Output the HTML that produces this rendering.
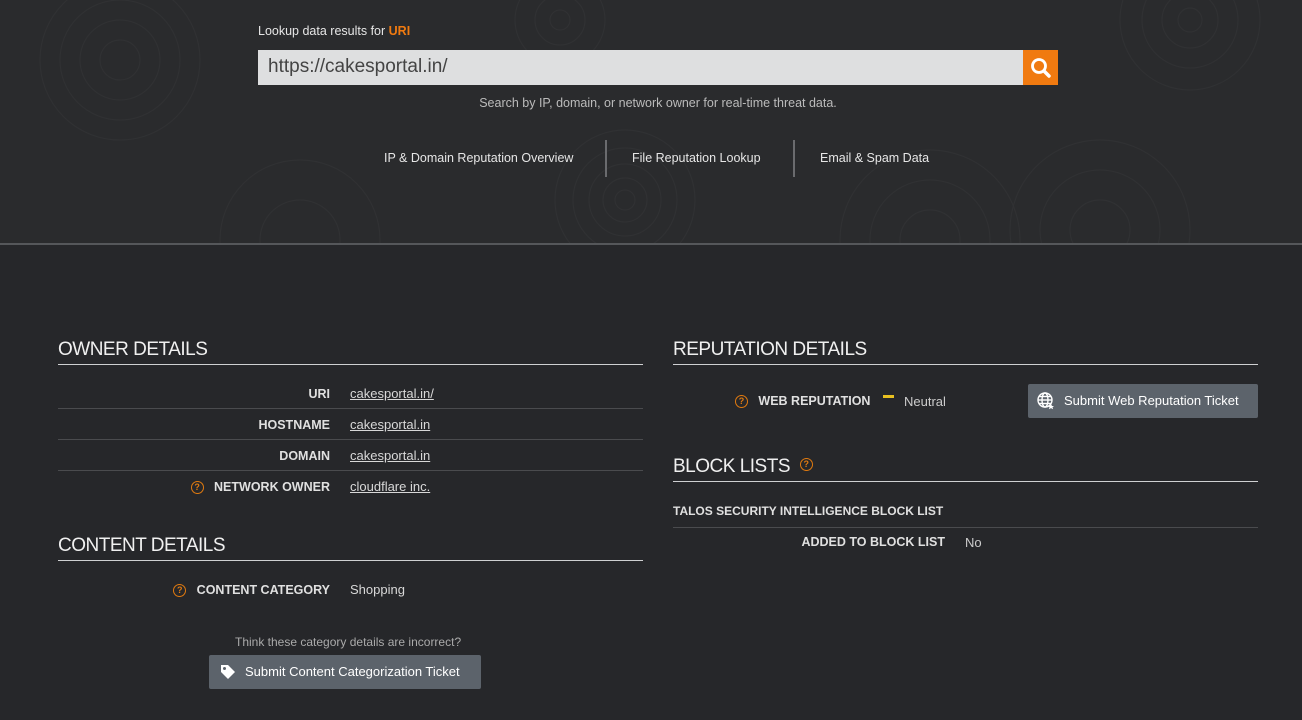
<!DOCTYPE html>
<html><head><style>
*{margin:0;padding:0;box-sizing:border-box}
body{width:1302px;height:720px;background:#26272a;font-family:"Liberation Sans",sans-serif;color:#e6e6e6;position:relative;overflow:hidden;font-size:13px}
.hdr{position:absolute;left:0;top:0;width:1302px;height:245px;background:#2a2b2d;border-bottom:2px solid #55575a;overflow:hidden}
.a{position:absolute}
.h2{position:absolute;font-size:19px;color:#f0f0f0;border-bottom:1px solid #cfd0d2;padding-bottom:3px;letter-spacing:-0.5px}
.row{position:absolute;left:58px;width:585px;height:31px;border-bottom:1px solid #4a4b4e}
.lbl{position:absolute;right:313px;top:9px;font-weight:bold;font-size:12.5px;color:#e0e0e0}
.val{position:absolute;left:292px;top:8px;color:#d8d8d8;text-decoration:underline;font-size:13px}
.q{display:inline-block;width:13px;height:13px;border:1.5px solid #e07a10;border-radius:50%;color:#e07a10;font-size:9px;text-align:center;line-height:10px;font-weight:bold;vertical-align:middle}
.btn{position:absolute;background:#5c636b;border-radius:2px;color:#fff;font-size:13px}
</style></head><body>
<div class="hdr">
<svg width="1302" height="244" style="position:absolute;left:0;top:0" fill="none" stroke="#303133" stroke-width="1.2">
<g><circle cx="120" cy="60" r="20"/><circle cx="120" cy="60" r="40"/><circle cx="120" cy="60" r="60"/><circle cx="120" cy="60" r="80"/></g>
<g><circle cx="625" cy="200" r="10"/><circle cx="625" cy="200" r="22"/><circle cx="625" cy="200" r="36"/><circle cx="625" cy="200" r="52"/><circle cx="625" cy="200" r="70"/></g>
<g><circle cx="560" cy="20" r="10"/><circle cx="560" cy="20" r="25"/><circle cx="560" cy="20" r="45"/></g>
<g><circle cx="1190" cy="20" r="12"/><circle cx="1190" cy="20" r="28"/><circle cx="1190" cy="20" r="48"/><circle cx="1190" cy="20" r="70"/></g>
<g><circle cx="930" cy="240" r="30"/><circle cx="930" cy="240" r="60"/><circle cx="930" cy="240" r="90"/></g>
<g><circle cx="1100" cy="230" r="30"/><circle cx="1100" cy="230" r="60"/><circle cx="1100" cy="230" r="90"/></g>
<g><circle cx="300" cy="240" r="40"/><circle cx="300" cy="240" r="80"/></g>
</svg>
<div class="a" style="left:258px;top:24px;font-size:12.5px">Lookup data results for <span style="color:#f07a10;font-weight:bold">URI</span></div>
<div class="a" style="left:258px;top:50px;width:765px;height:35px;background:#dedfe0;color:#444;font-size:19px;padding:6px 0 0 10px">https://cakesportal.in/</div>
<div class="a" style="left:1023px;top:50px;width:35px;height:35px;background:#f07a10">
<svg width="35" height="35"><circle cx="16" cy="16" r="6.5" stroke="#fff" stroke-width="2.8" fill="none"/><line x1="21" y1="21" x2="26" y2="26" stroke="#fff" stroke-width="3.5" stroke-linecap="round"/></svg></div>
<div class="a" style="left:0;width:1316px;top:96px;text-align:center;font-size:12.5px;color:#bbb">Search by IP, domain, or network owner for real-time threat data.</div>
<div class="a" style="left:384px;top:151px;font-size:12.5px">IP &amp; Domain Reputation Overview</div>
<div class="a" style="left:605px;top:140px;width:2px;height:37px;background:#6a6b6e"></div>
<div class="a" style="left:632px;top:151px;font-size:12.5px">File Reputation Lookup</div>
<div class="a" style="left:793px;top:140px;width:2px;height:37px;background:#6a6b6e"></div>
<div class="a" style="left:820px;top:151px;font-size:12.5px">Email &amp; Spam Data</div>
</div>

<div class="h2" style="left:58px;top:339px;width:585px">OWNER DETAILS</div>
<div class="row" style="top:378px"><span class="lbl">URI</span><span class="val">cakesportal.in/</span></div>
<div class="row" style="top:409px"><span class="lbl">HOSTNAME</span><span class="val">cakesportal.in</span></div>
<div class="row" style="top:440px"><span class="lbl">DOMAIN</span><span class="val">cakesportal.in</span></div>
<div class="row" style="top:471px;border:none"><span class="lbl"><span class="q">?</span>&nbsp;&nbsp; NETWORK OWNER</span><span class="val">cloudflare inc.</span></div>

<div class="h2" style="left:58px;top:535px;width:585px">CONTENT DETAILS</div>
<div class="a" style="right:972px;top:583px;font-weight:bold;font-size:12.5px;color:#e0e0e0"><span class="q">?</span>&nbsp;&nbsp; CONTENT CATEGORY</div>
<div class="a" style="left:350px;top:582px;color:#d8d8d8">Shopping</div>
<div class="a" style="left:235px;top:635px;font-size:12px;color:#aaa">Think these category details are incorrect?</div>
<div class="btn" style="left:209px;top:655px;width:272px;height:34px">
<svg class="a" style="left:11px;top:9px" width="16" height="16" viewBox="0 0 16 16"><path d="M1 1h7l7 7-7 7-7-7z" fill="#fff"/><circle cx="4.5" cy="4.5" r="1.5" fill="#5c636b"/></svg>
<span class="a" style="left:36px;top:9px">Submit Content Categorization Ticket</span></div>

<div class="h2" style="left:673px;top:339px;width:585px">REPUTATION DETAILS</div>
<div class="a" style="left:735px;top:394px;font-weight:bold;font-size:12.5px;color:#e0e0e0"><span class="q">?</span>&nbsp;&nbsp; WEB REPUTATION</div>
<div class="a" style="left:883px;top:395px;width:11px;height:3px;background:#e8c020"></div>
<div class="a" style="left:904px;top:394px;color:#ccc">Neutral</div>
<div class="btn" style="left:1028px;top:384px;width:230px;height:34px">
<svg class="a" style="left:9px;top:8px" width="18" height="18" viewBox="0 0 18 18" fill="none" stroke="#fff" stroke-width="1.4"><circle cx="8" cy="8" r="7"/><ellipse cx="8" cy="8" rx="3" ry="7"/><line x1="1" y1="8" x2="15" y2="8"/><line x1="2" y1="4.5" x2="14" y2="4.5"/><line x1="2" y1="11.5" x2="14" y2="11.5"/><path d="M14 12l1 2h2l-1.5 1.3.6 2-2.1-1.2-2.1 1.2.6-2L11 14h2z" fill="#fff" stroke="none"/></svg>
<span class="a" style="left:36px;top:9px">Submit Web Reputation Ticket</span></div>

<div class="h2" style="left:673px;top:456px;width:585px">BLOCK LISTS &nbsp;<span class="q" style="margin-top:-4px">?</span></div>
<div class="a" style="left:673px;top:504px;width:585px;height:24px;border-bottom:1px solid #4a4b4e;font-weight:bold;font-size:12px;color:#e0e0e0">TALOS SECURITY INTELLIGENCE BLOCK LIST</div>
<div class="a" style="right:357px;top:535px;font-weight:bold;font-size:12.5px;color:#e0e0e0">ADDED TO BLOCK LIST</div>
<div class="a" style="left:965px;top:535px;color:#ccc">No</div>
</body></html>
